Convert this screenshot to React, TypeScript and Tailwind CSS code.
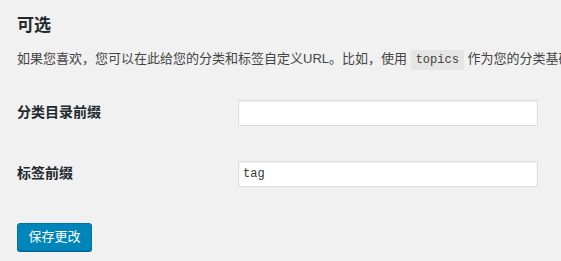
const sans = "font-['Liberation_Sans','Noto_Sans_CJK_SC',sans-serif]"

const fields = [
  { label: '分类目录前缀', value: '' },
  { label: '标签前缀', value: 'tag' },
]

export default function App() {
  return (
    <div className={`w-[561px] h-[261px] overflow-hidden bg-[#f1f1f1] pl-[17px] pt-[14px] ${sans}`}>
      <h2 className="text-[17px] leading-[23px] font-semibold text-[#23282d]">可选</h2>
      <p className="mt-[12px] whitespace-nowrap text-[13px] leading-[20px] text-[#444]">
        如果您喜欢，您可以在此给您的分类和标签自定义URL。比如，使用{' '}
        <code className="bg-[#e5e5e5] px-[5px] pt-[3px] pb-[3px] font-['Liberation_Mono',monospace] text-[12px] text-[#444]">
          topics
        </code>{' '}
        作为您的分类基础，那么您的分类链接将是 http://example.com/topics/uncategorized/。如果您留空，那么将使用默认值。
      </p>
      <div className="mt-[12px] flex flex-col">
        {fields.map((f) => (
          <div key={f.label} className="flex h-[61px] items-center">
            <label className="w-[221px] text-[14px] font-semibold text-[#23282d]">{f.label}</label>
            <input
              type="text"
              defaultValue={f.value}
              className="h-[26px] w-[300px] border border-[#ddd] bg-white px-[4px] font-['Liberation_Mono',monospace] text-[12px] text-[#32373c] shadow-[inset_0_1px_2px_rgba(0,0,0,0.07)] outline-none"
            />
          </div>
        ))}
      </div>
      <button className="mt-[19px] h-[28px] w-[75px] rounded-[3px] border border-[#0073aa] bg-[#0085ba] text-[13px] text-white shadow-[0_1px_0_#006799]">
        保存更改
      </button>
    </div>
  )
}
